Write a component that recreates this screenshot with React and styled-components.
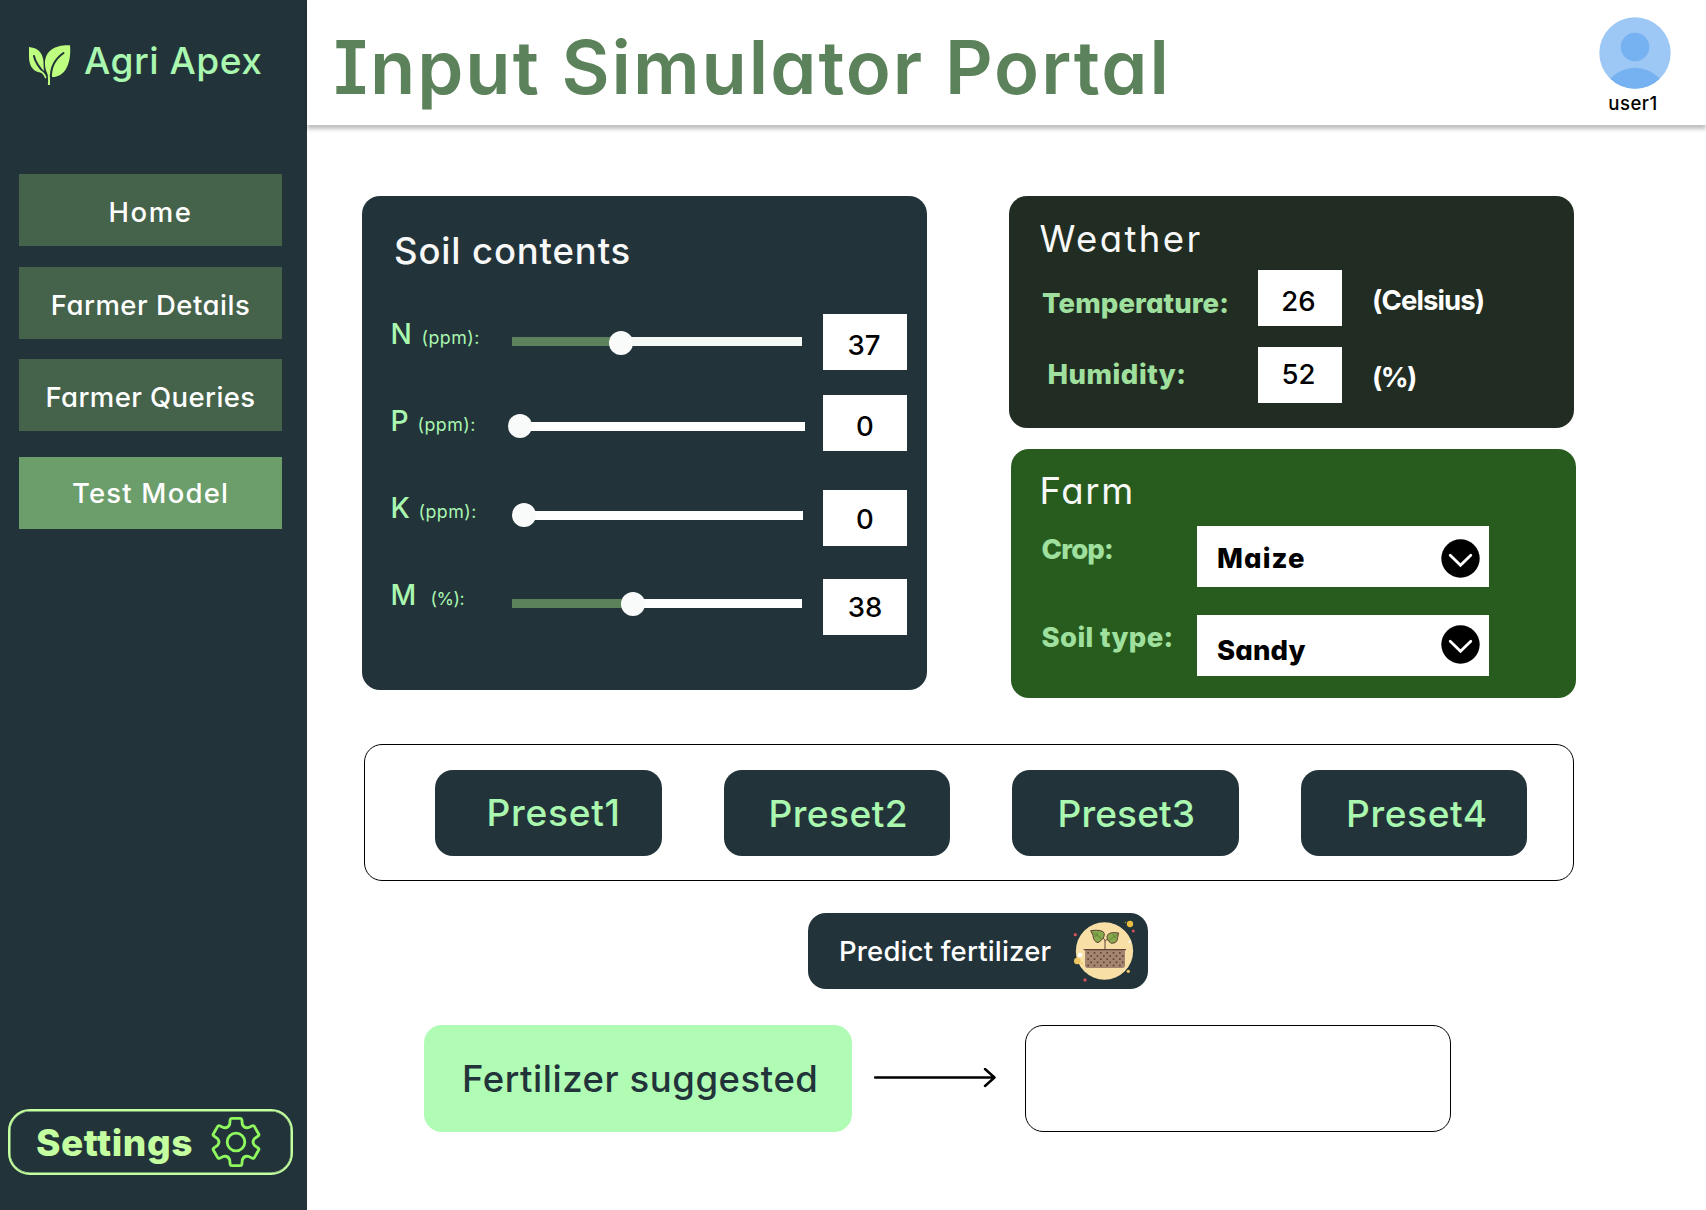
import React from "react";
import styled, { createGlobalStyle } from "styled-components";

const GlobalStyle = createGlobalStyle`
  * { box-sizing: border-box; }
  body {
    margin: 0;
    background: #ffffff;
    font-family: Inter, "Open Sans", sans-serif;
    font-feature-settings: "cv08", "cv11";
  }
  button { border: 0; font: inherit; font-feature-settings: inherit; color: inherit; }
`;

const slate = "#22343a";
const mint = "#aaf7b0";

const Page = styled.div`
  display: flex;
  width: 1706px;
  height: 1210px;
  overflow: hidden;
  background: #ffffff;
`;

/* One line of text: size, weight, tracking; $dy nudges it inside a centred row. */
const Text = styled.span`
  display: block;
  white-space: pre;
  line-height: 1;
  font-size: ${(p) => p.$size}px;
  font-weight: ${(p) => p.$weight || 500};
  letter-spacing: ${(p) => p.$track || 0}px;
  color: ${(p) => p.$color || "inherit"};
  margin-top: ${(p) => 2 * (p.$dy || 0)}px;
`;

/* ---------- Sidebar ---------- */

const Sidebar = styled.aside`
  flex: none;
  width: 307px;
  height: 1210px;
  display: flex;
  flex-direction: column;
  background: ${slate};
`;

const Brand = styled.div`
  display: flex;
  height: 174px;
  padding: 42px 0 0 28px;
  gap: 13px;
`;

const Leaves = styled.svg`
  width: 43px;
  height: 42px;
  margin-top: 2px;
`;

const Nav = styled.nav`
  display: flex;
  flex-direction: column;
  padding-left: 19px;
`;

const NavButton = styled.button`
  display: flex;
  align-items: center;
  justify-content: center;
  width: 263px;
  height: 72px;
  padding: 0;
  margin-bottom: ${(p) => p.$gap}px;
  color: #ffffff;
  background: ${(p) => (p.$active ? "#6b9e6b" : "#45624b")};
`;

const SettingsButton = styled.button`
  display: flex;
  align-items: center;
  width: 285px;
  height: 66px;
  margin: auto 0 35px 8px;
  padding: 0 29px 0 26px;
  justify-content: space-between;
  border: 2px solid #c4ffa0;
  border-radius: 22px;
  box-shadow: inset 0 0 0 0.5px #c4ffa0;
  background: transparent;
  color: #c4ffa0;
`;

const GearIcon = styled.svg`
  width: 52px;
  height: 52px;
`;

/* ---------- Main ---------- */

const Main = styled.main`
  flex: 1;
  display: flex;
  flex-direction: column;
`;

const Header = styled.header`
  flex: none;
  display: flex;
  align-items: flex-start;
  justify-content: space-between;
  height: 125px;
  padding: 0 35px 0 26.5px;
  box-shadow: 0 4px 4px rgba(0, 0, 0, 0.25);
`;

const Title = styled.h1`
  margin: 30px 0 0;
  font-size: 74px;
  font-weight: 570;
  line-height: 74px;
  letter-spacing: 2px;
  white-space: nowrap;
  color: #5b825a;
`;

const User = styled.div`
  display: flex;
  flex-direction: column;
  align-items: center;
  gap: 5px;
  padding-top: 17px;
`;

const Avatar = styled.svg`
  width: 72px;
  height: 72px;
`;

const UserName = styled(Text)`
  padding-right: 4px;
`;

const Panels = styled.section`
  display: flex;
  height: 502px;
  margin: 71px 0 0 55px;
`;

const Card = styled.div`
  display: flex;
  flex-direction: column;
  width: 565px;
  height: ${(p) => p.$height}px;
  padding-top: ${(p) => p.$top}px;
  border-radius: 18px;
  background: ${(p) => p.$bg};
`;

const CardTitle = styled.h2`
  margin: 0 0 ${(p) => p.$gap}px ${(p) => p.$left}px;
  font-size: 36.5px;
  line-height: 36px;
  font-weight: ${(p) => p.$weight || 500};
  letter-spacing: ${(p) => p.$track}px;
  color: #f8f8f8;
`;

const SideColumn = styled.div`
  display: flex;
  flex-direction: column;
  gap: 21.4px;
  margin-left: 82px;
`;

const FarmCard = styled(Card)`
  margin-left: 2px;
`;

const Row = styled.div`
  flex: none;
  display: flex;
  align-items: center;
  height: ${(p) => p.$height || 56}px;
  margin-bottom: ${(p) => p.$gap || 0}px;
`;

const LabelCell = styled.div`
  flex: none;
  display: flex;
  align-items: baseline;
  width: ${(p) => p.$width}px;
  padding-left: ${(p) => p.$left}px;
  margin-top: ${(p) => 2 * (p.$dy || 0)}px;
  color: ${(p) => p.$color || "#a0e09e"};
`;

const Symbol = styled(Text)`
  width: ${(p) => p.$width}px;
`;

const Track = styled.div`
  position: relative;
  flex: none;
  width: 290px;
  height: 9px;
  margin-left: ${(p) => p.$shift}px;
  margin-top: ${(p) => 2 * p.$dy}px;
  margin-right: ${(p) => 21 - p.$shift}px;
  background: ${(p) => p.$tone || "#ffffff"};
`;

const Fill = styled.div`
  height: 100%;
  background: #5b825a;
`;

const Knob = styled.div`
  position: absolute;
  top: ${(p) => -7.5 + p.$lift}px;
  width: 24px;
  height: 24px;
  margin-left: -12px;
  border-radius: 50%;
  background: #f9fbfb;
`;

const ValueBox = styled.div`
  flex: none;
  display: flex;
  align-items: center;
  justify-content: center;
  width: 84px;
  height: 56px;
  padding-right: ${(p) => p.$inset || 0}px;
  background: #ffffff;
  color: #000000;
`;

const Unit = styled(Text)`
  margin-left: 30px;
`;

const Select = styled.div`
  flex: none;
  display: flex;
  align-items: center;
  justify-content: space-between;
  width: 292px;
  height: 61px;
  padding: 0 9px 0 20px;
  background: #ffffff;
  color: #000000;
`;

const Chevron = styled.svg`
  width: 39px;
  height: 39px;
  margin-top: ${(p) => 2 * p.$dy}px;
`;

const Presets = styled.section`
  display: flex;
  align-items: flex-start;
  gap: 62px;
  width: 1210px;
  height: 137px;
  margin: 46px 0 0 57px;
  padding: 25px 0 0 70px;
  border: 1px solid #000000;
  border-radius: 18px;
`;

const PresetButton = styled.button`
  flex: none;
  display: flex;
  align-items: center;
  width: 226.5px;
  height: 86px;
  padding: 0 0 0 ${(p) => p.$left}px;
  border-radius: 18px;
  background: ${slate};
  color: ${mint};
`;

const PredictButton = styled.button`
  display: flex;
  align-items: center;
  justify-content: space-between;
  width: 340px;
  height: 76px;
  margin: 32px 0 0 500.5px;
  padding: 0 8px 0 31.5px;
  border-radius: 18px;
  background: ${slate};
  color: #ffffff;
`;

const PlantIcon = styled.svg`
  width: 68px;
  height: 66px;
`;

const ResultRow = styled.section`
  display: flex;
  align-items: center;
  margin: 36px 0 0 117px;
`;

const ResultLabel = styled.div`
  display: flex;
  align-items: center;
  width: 428px;
  height: 107px;
  padding-left: 38px;
  border-radius: 18px;
  background: #b0fcb5;
  color: ${slate};
`;

const Arrow = styled.svg`
  width: 124px;
  height: 20px;
  margin: -2px 27px 0 22px;
`;

const ResultBox = styled.div`
  width: 426px;
  height: 107px;
  border: 1px solid #000000;
  border-radius: 18px;
`;

/* ---------- Drawings ---------- */

function LeafLogo() {
  return (
    <Leaves viewBox="28 44 43 42" fill="none">
      <path d="M29 47C40 48 44 55 43.6 66C43.6 68 44 70 44 72C38 74 29 70 29 57Z" fill="#bfff80" />
      <path d="M70 45.2C56 44.6 44.6 50 45 64C45 68 46 71 47.4 73.5L52.2 77C66 77 71.5 62 70 45.2Z" fill="#bfff80" />
      <path d="M34 56C35 62 39 67.5 45.6 74.5" stroke={slate} strokeWidth="2" strokeLinecap="round" />
      <path d="M63.5 53C55 59 50.5 67 51 77.5" stroke={slate} strokeWidth="2.1" strokeLinecap="round" />
      <path d="M39 70.5C42.5 72 44.5 74 45.6 77.5" stroke="#bfff80" strokeWidth="1.6" strokeLinecap="round" />
      <path d="M47.9 71.5C49.2 75 49.2 80 48.9 85" stroke="#bfff80" strokeWidth="2" />
    </Leaves>
  );
}

const gearPath = (() => {
  const at = (u, v, deg) => {
    const a = (deg * Math.PI) / 180;
    return `${(u * Math.cos(a) - v * Math.sin(a)).toFixed(2)} ${(u * Math.sin(a) + v * Math.cos(a)).toFixed(2)}`;
  };
  let d = "";
  for (let k = 0; k < 6; k += 1) {
    const t = k * 60 - 90;
    d += `${k ? "L" : "M"}${at(53, -19, t)}L${at(67, -17.5, t)}Q${at(71, -17, t)} ${at(71, -13, t)}`;
    d += `L${at(71, 13, t)}Q${at(71, 17, t)} ${at(67, 17.5, t)}L${at(53, 19, t)}`;
    d += `Q${at(47, 0, t + 30)} ${at(53, -19, t + 60)}`;
  }
  return `${d}Z`;
})();

function Gear() {
  return (
    <GearIcon viewBox="-78 -78 156 156" fill="none" stroke="#8ff85e" strokeWidth="8.5" strokeLinejoin="round">
      <path d={gearPath} />
      <circle r="26.5" />
    </GearIcon>
  );
}

function UserAvatar() {
  return (
    <Avatar viewBox="0 0 72 72">
      <defs>
        <clipPath id="avatarClip">
          <circle cx="36" cy="36" r="35.7" />
        </clipPath>
      </defs>
      <circle cx="36" cy="36" r="35.7" fill="#9dc7f5" />
      <circle cx="36" cy="30" r="14.3" fill="#76b1f1" />
      <circle cx="36" cy="84" r="33.2" fill="#76b1f1" clipPath="url(#avatarClip)" />
    </Avatar>
  );
}

function DropIcon({ dy }) {
  return (
    <Chevron $dy={dy} viewBox="0 0 39 39" fill="none">
      <circle cx="19.5" cy="19.5" r="19.2" fill="#000000" />
      <path d="M9.2 16.2L19.5 26.3L29.8 16.2" stroke="#ffffff" strokeWidth="2.8" strokeLinecap="round" />
    </Chevron>
  );
}

function Plant() {
  const specks = [];
  for (let r = 0; r < 5; r += 1) {
    for (let c = 0; c < 6; c += 1) {
      specks.push(<rect key={`${r}-${c}`} x={877 + c * 19 + (r % 2) * 9} y={156 + r * 9.5} width="5" height="5" fill="#5d4338" />);
    }
  }
  return (
    <PlantIcon viewBox="831 54 204 198">
      <circle cx="928.5" cy="153" r="86" fill="#f8dfa6" />
      <rect x="870" y="148" width="120" height="56" rx="8" fill="#a38570" />
      {specks}
      <path d="M866 149H993" stroke="#5d4338" strokeWidth="3.5" />
      <path d="M930 148V122Q927 112 905 101M930 124Q934 116 958 107" stroke="#5d4338" strokeWidth="3" fill="none" />
      <path d="M887 92Q925 87 928 101Q929 116 909 128Q895 125 894 106Z" fill="#86a94c" stroke="#5d4338" strokeWidth="3" />
      <path d="M971 99Q940 94 936 109Q936 123 949 130Q968 130 968 112Z" fill="#86a94c" stroke="#5d4338" strokeWidth="3" />
      <path d="M892 96L921 117M906 97L908 106L897 109M968 103L942 121M955 102L956 110L964 113" stroke="#5f7d38" strokeWidth="2.4" fill="none" />
      <circle cx="1005" cy="72" r="9.5" fill="#e9bd42" />
      <circle cx="991" cy="67" r="2" fill="#e9bd42" />
      <circle cx="1015" cy="93" r="4.5" fill="#d94f5c" />
      <circle cx="841" cy="104" r="4.8" fill="#d94f5c" />
      <circle cx="870" cy="240" r="5" fill="#d94f5c" />
      <circle cx="1004" cy="126" r="3.5" fill="#ffffff" />
      <circle cx="847" cy="183" r="10" fill="#efc662" />
      <circle cx="861" cy="190" r="3" fill="#efc662" />
      <circle cx="1000" cy="214" r="5" fill="#efc662" />
      <circle cx="855" cy="165" r="7" fill="#ffffff" />
    </PlantIcon>
  );
}

/* ---------- Data ---------- */

const navItems = [
  { text: "Home", track: 1.6, dy: 3, gap: 21 },
  { text: "Farmer Details", track: 0.5, dy: 3, gap: 20 },
  { text: "Farmer Queries", track: 0.4, dy: 3, gap: 26 },
  { text: "Test Model", track: 1.2, dy: 1, gap: 0, active: true },
];

const soilRows = [
  { symbol: "N", width: 31, unit: "(ppm):", track: 0.5, value: "37", labelDy: -7.5, valueDy: 4, trackDy: -0.5, shift: 0, knob: 108.5, lift: 1.5, fill: 108, tone: "#f5f9f6", inset: 2, gap: 25 },
  { symbol: "P", width: 27, unit: "(ppm):", track: 0.5, value: "0", labelDy: -1.5, valueDy: 4, trackDy: 3.5, shift: 3, knob: 5, lift: -1, fill: 0, gap: 39 },
  { symbol: "K", width: 28, unit: "(ppm):", track: 0.5, value: "0", labelDy: -9.7, valueDy: 2, trackDy: -2.5, shift: 1, knob: 11, lift: -0.7, fill: 0, gap: 33 },
  { symbol: "M", width: 40, unit: "(%):", track: -0.5, value: "38", labelDy: -11.7, valueDy: 1, trackDy: -3.5, shift: -0.5, knob: 121.5, lift: 0.5, fill: 121, gap: 0 },
];

const weatherRows = [
  { label: "Temperature:", left: 33, track: 0.1, labelDy: 5.5, value: "26", valueDy: 4, unit: "(Celsius)", unitTrack: -0.9, unitDy: 2.5, gap: 21 },
  { label: "Humidity:", left: 38.5, track: 0.5, labelDy: 0, value: "52", valueDy: 0, unit: "(%)", unitTrack: -1.65, unitDy: 3, gap: 0 },
];

const farmRows = [
  { label: "Crop:", track: -0.8, labelDy: -7, value: "Maize", valueTrack: 1.1, valueDy: 2.4, iconDy: 2, gap: 28 },
  { label: "Soil type:", track: 0.35, labelDy: -8, value: "Sandy", valueTrack: 0.1, valueDy: 5, iconDy: -1.2, gap: 0 },
];

const presets = [
  { text: "Preset1", left: 51.5, track: 0.75, dy: -0.5 },
  { text: "Preset2", left: 45, track: 0.46, dy: 1 },
  { text: "Preset3", left: 45.5, track: 0.13, dy: 1 },
  { text: "Preset4", left: 45.5, track: 0.62, dy: 1 },
];

export default function App() {
  return (
    <Page>
      <GlobalStyle />
      <Sidebar>
        <Brand>
          <LeafLogo />
          <Text $size={37.1} $track={0.51} $color={mint}>Agri Apex</Text>
        </Brand>
        <Nav>
          {navItems.map((n) => (
            <NavButton key={n.text} $gap={n.gap} $active={n.active}>
              <Text $size={27.5} $track={n.track} $dy={n.dy}>{n.text}</Text>
            </NavButton>
          ))}
        </Nav>
        <SettingsButton>
          <Text $size={37.1} $weight={800} $track={0.55} $dy={1}>Settings</Text>
          <Gear />
        </SettingsButton>
      </Sidebar>

      <Main>
        <Header>
          <Title>Input Simulator Portal</Title>
          <User>
            <UserAvatar />
            <UserName $size={18.6} $track={0.45} $color="#000000">user1</UserName>
          </User>
        </Header>

        <Panels>
          <Card $height={494} $top={37} $bg={slate}>
            <CardTitle $left={32} $gap={45} $track={0.85}>Soil contents</CardTitle>
            {soilRows.map((r) => (
              <Row key={r.symbol} $gap={r.gap}>
                <LabelCell $width={150} $left={28.5} $dy={r.labelDy} $color={mint}>
                  <Symbol $size={28.2} $width={r.width}>{r.symbol}</Symbol>
                  <Text $size={17.8} $weight={400} $track={r.track}>{r.unit}</Text>
                </LabelCell>
                <Track $shift={r.shift} $dy={r.trackDy} $tone={r.tone}>
                  <Fill style={{ width: r.fill }} />
                  <Knob $lift={r.lift} style={{ left: r.knob }} />
                </Track>
                <ValueBox $inset={r.inset}>
                  <Text $size={27.5} $dy={r.valueDy}>{r.value}</Text>
                </ValueBox>
              </Row>
            ))}
          </Card>

          <SideColumn>
            <Card $height={232} $top={24.5} $bg="#212d22">
              <CardTitle $left={30.5} $gap={13.5} $weight={420} $track={2.4}>Weather</CardTitle>
              {weatherRows.map((r) => (
                <Row key={r.label} $gap={r.gap}>
                  <LabelCell $width={249} $left={r.left} $dy={r.labelDy}>
                    <Text $size={27.5} $weight={800} $track={r.track}>{r.label}</Text>
                  </LabelCell>
                  <ValueBox $inset={3}>
                    <Text $size={27.5} $dy={r.valueDy}>{r.value}</Text>
                  </ValueBox>
                  <Unit $size={27.5} $weight={750} $track={r.unitTrack} $dy={r.unitDy} $color="#ffffff">{r.unit}</Unit>
                </Row>
              ))}
            </Card>

            <FarmCard $height={249} $top={23.6} $bg="#285c1e">
              <CardTitle $left={28.5} $gap={17.2} $weight={420} $track={1.7}>Farm</CardTitle>
              {farmRows.map((r) => (
                <Row key={r.label} $height={61} $gap={r.gap}>
                  <LabelCell $width={186} $left={30.5} $dy={r.labelDy}>
                    <Text $size={27.5} $weight={800} $track={r.track}>{r.label}</Text>
                  </LabelCell>
                  <Select>
                    <Text $size={27.5} $weight={850} $track={r.valueTrack} $dy={r.valueDy}>{r.value}</Text>
                    <DropIcon dy={r.iconDy} />
                  </Select>
                </Row>
              ))}
            </FarmCard>
          </SideColumn>
        </Panels>

        <Presets>
          {presets.map((p) => (
            <PresetButton key={p.text} $left={p.left}>
              <Text $size={37.1} $track={p.track} $dy={p.dy}>{p.text}</Text>
            </PresetButton>
          ))}
        </Presets>

        <PredictButton>
          <Text $size={27.5} $track={0.17} $dy={1}>Predict fertilizer</Text>
          <Plant />
        </PredictButton>

        <ResultRow>
          <ResultLabel>
            <Text $size={36.5} $weight={540} $track={0.55} $dy={1}>Fertilizer suggested</Text>
          </ResultLabel>
          <Arrow viewBox="0 0 124 20" fill="none" stroke="#000000" strokeWidth="2.4">
            <path d="M1 9.5H120M111 1L120.5 9.5L111 18" strokeLinecap="round" strokeLinejoin="round" />
          </Arrow>
          <ResultBox />
        </ResultRow>
      </Main>
    </Page>
  );
}
